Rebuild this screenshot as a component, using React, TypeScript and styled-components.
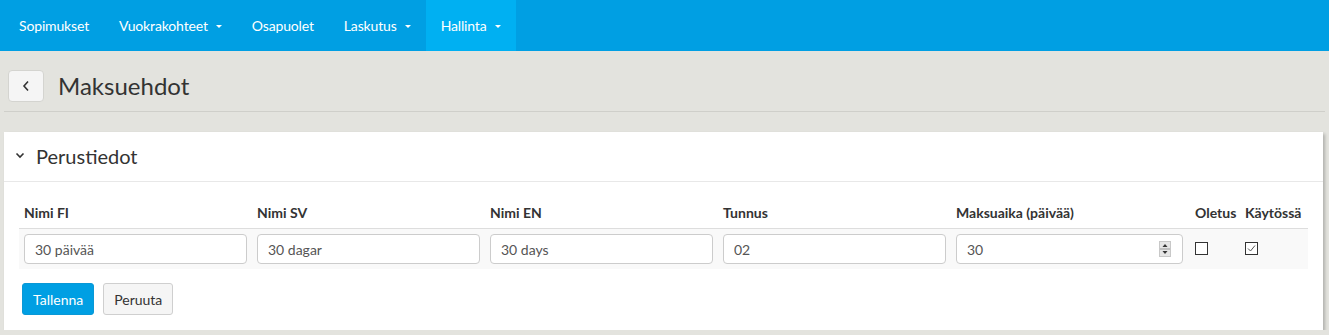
import React from "react";
import styled, { createGlobalStyle } from "styled-components";

const Global = createGlobalStyle`
  html, body { margin: 0; padding: 0; background: #e3e3de; }
  body { font-family: Lato, "Open Sans", sans-serif; font-size: 14px; color: #333; }
  * { box-sizing: border-box; }
`;

const NavBar = styled.nav`
  height: 51px;
  background: #009fe3;
  display: flex;
  padding-left: 4px;
`;

const NavItem = styled.a<{ $active?: boolean }>`
  display: flex;
  align-items: center;
  padding: 0 15px;
  color: #fff;
  text-decoration: none;
  font-size: 14px;
  letter-spacing: -0.15px;
  background: ${(p) => (p.$active ? "#00b0f2" : "transparent")};
`;

const Caret = styled.span`
  display: inline-block;
  margin-left: 8px;
  margin-top: 1px;
  width: 0;
  height: 0;
  border-left: 3px solid transparent;
  border-right: 3px solid transparent;
  border-top: 3px solid #fff;
`;

const PageHeader = styled.div`
  display: flex;
  align-items: center;
  gap: 14px;
  margin: 0 4px;
  padding: 19px 0 9px 4px;
  border-bottom: 1px solid #cfcfca;
`;

const BackButton = styled.button`
  width: 36px;
  height: 32px;
  display: flex;
  align-items: center;
  justify-content: center;
  background: #f5f5f5;
  border: 1px solid #d4d4d0;
  border-radius: 4px;
  padding: 0;
`;

const Title = styled.h1`
  margin: 0;
  font-size: 24px;
  font-weight: 400;
  color: #333;
  line-height: 32px;
`;

const Panel = styled.section`
  margin: 20px 6px 0 4px;
  background: #fff;
  box-shadow: 2px 2px 3px rgba(0, 0, 0, 0.22);
`;

const PanelHeading = styled.div`
  height: 50px;
  display: flex;
  align-items: center;
  gap: 11px;
  padding: 0 0 2px 11px;
  border-bottom: 1px solid #e8e8e8;
  font-size: 20px;
  color: #333;
`;

const PanelBody = styled.div`
  padding: 15px;
`;

const FormGrid = styled.div`
  display: grid;
  grid-template-columns: 233px 233px 233px 233px 239px 50px 1fr;
`;

const HeadCell = styled.div`
  padding: 6px 5px 5px;
  font-weight: 700;
  line-height: 20px;
  border-bottom: 1px solid #dddddd;
  white-space: nowrap;
`;

const Cell = styled.div`
  padding: 5px;
  background: #f9f9f9;
  display: flex;
  align-items: center;
`;

const TextInput = styled.input`
  width: 100%;
  height: 30px;
  border: 1px solid #ccc;
  border-radius: 4px;
  padding: 0 10px;
  font-family: inherit;
  font-size: 14px;
  color: #555;
  background: #fff;
  outline: none;
`;

const NumberBox = styled.div`
  width: 100%;
  height: 30px;
  margin-right: 2px;
  border: 1px solid #ccc;
  border-radius: 4px;
  padding: 0 11px 0 10px;
  background: #fff;
  display: flex;
  align-items: center;
`;

const BareInput = styled.input`
  flex: 1;
  min-width: 0;
  border: none;
  padding: 0;
  font-family: inherit;
  font-size: 14px;
  color: #555;
  outline: none;
  background: transparent;
`;

const CheckBox = styled.span`
  width: 13px;
  height: 13px;
  border: 1px solid #333;
  background: #fff;
  display: flex;
  align-items: center;
  justify-content: center;
  margin-top: -2px;
`;

const Actions = styled.div`
  display: flex;
  gap: 9px;
  margin-top: 14px;
  padding-left: 3px;
`;

const Button = styled.button<{ $primary?: boolean }>`
  height: 32px;
  padding: 0 10px;
  font-family: inherit;
  font-size: 14px;
  border-radius: 3px;
  border: 1px solid ${(p) => (p.$primary ? "#0a98d6" : "#cfcfcf")};
  background: ${(p) => (p.$primary ? "#009fe3" : "#f5f5f5")};
  color: ${(p) => (p.$primary ? "#fff" : "#333")};
`;

const Spinner = () => (
  <svg width="12" height="16" viewBox="0 0 12 16">
    <rect x="0.5" y="0.5" width="11" height="15" fill="#e6e6e6" stroke="#c8c8c8" />
    <line x1="1" y1="8" x2="11" y2="8" stroke="#9a9a9a" />
    <polygon points="3.5,6 8.5,6 6,3" fill="#333" />
    <polygon points="3.5,10 8.5,10 6,13" fill="#333" />
  </svg>
);

const columns = ["Nimi FI", "Nimi SV", "Nimi EN", "Tunnus", "Maksuaika (päivää)", "Oletus", "Käytössä"];

export default function App() {
  return (
    <>
      <Global />
      <NavBar>
        <NavItem>Sopimukset</NavItem>
        <NavItem>
          Vuokrakohteet<Caret />
        </NavItem>
        <NavItem>Osapuolet</NavItem>
        <NavItem>
          Laskutus<Caret />
        </NavItem>
        <NavItem $active>
          Hallinta<Caret />
        </NavItem>
      </NavBar>
      <PageHeader>
        <BackButton aria-label="Takaisin">
          <svg width="8" height="12" viewBox="0 0 8 12">
            <polyline points="6,1.5 2,6 6,10.5" fill="none" stroke="#333" strokeWidth="1.6" />
          </svg>
        </BackButton>
        <Title>Maksuehdot</Title>
      </PageHeader>
      <Panel>
        <PanelHeading>
          <svg width="10" height="7" viewBox="0 0 10 7">
            <polyline points="1.5,1.5 5,5 8.5,1.5" fill="none" stroke="#333" strokeWidth="1.6" />
          </svg>
          Perustiedot
        </PanelHeading>
        <PanelBody>
          <FormGrid>
            {columns.map((c) => (
              <HeadCell key={c}>{c}</HeadCell>
            ))}
            <Cell>
              <TextInput defaultValue="30 päivää" />
            </Cell>
            <Cell>
              <TextInput defaultValue="30 dagar" />
            </Cell>
            <Cell>
              <TextInput defaultValue="30 days" />
            </Cell>
            <Cell>
              <TextInput defaultValue="02" />
            </Cell>
            <Cell>
              <NumberBox>
                <BareInput defaultValue="30" />
                <Spinner />
              </NumberBox>
            </Cell>
            <Cell>
              <CheckBox />
            </Cell>
            <Cell>
              <CheckBox>
                <svg width="11" height="11" viewBox="0 0 11 11">
                  <polyline points="2,5.5 4.5,8 9,2.5" fill="none" stroke="#555" strokeWidth="1" />
                </svg>
              </CheckBox>
            </Cell>
          </FormGrid>
          <Actions>
            <Button $primary>Tallenna</Button>
            <Button>Peruuta</Button>
          </Actions>
        </PanelBody>
      </Panel>
    </>
  );
}
